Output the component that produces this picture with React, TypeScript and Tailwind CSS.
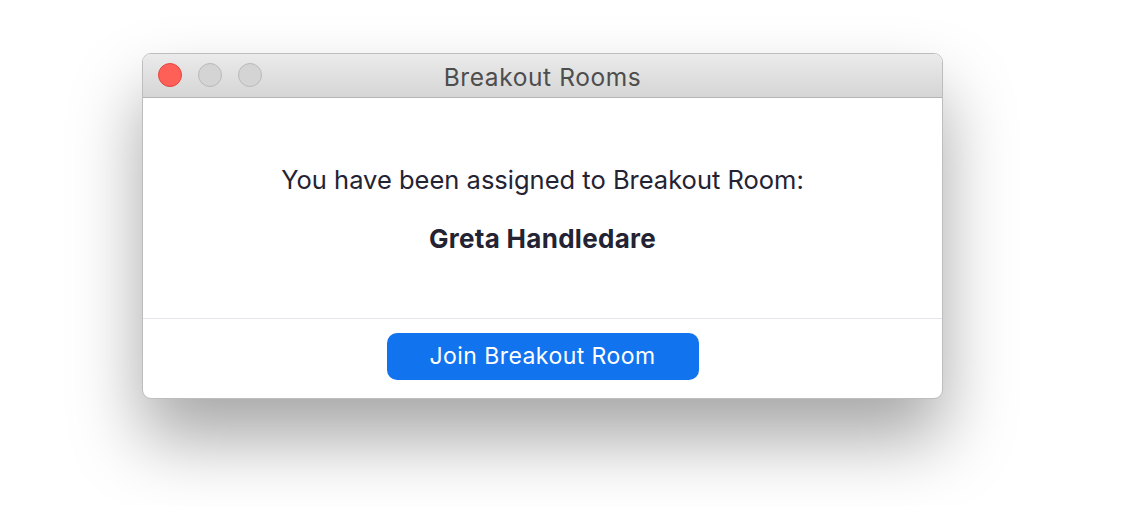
export default function App() {
  return (
    <div className="h-[506px] w-[1130px] bg-white pl-[142px] pt-[53px] font-['Inter','Noto_Sans',sans-serif]">
      <div className="flex w-[801px] flex-col overflow-hidden rounded-[9px] border border-[#bdbdbd] bg-white shadow-[0_40px_70px_rgba(0,0,0,0.35)]">
        <div className="relative flex h-[44px] items-center justify-center border-b border-[#b3b3b3] bg-gradient-to-b from-[#ebebeb] to-[#d5d5d5]">
          <div className="absolute left-[15px] top-[9px] flex gap-[16px]">
            <span className="h-[24px] w-[24px] rounded-full border border-[#e2463f] bg-[#fe5f57]" />
            <span className="h-[24px] w-[24px] rounded-full border border-[#b9b9b9] bg-[#d4d4d4]" />
            <span className="h-[24px] w-[24px] rounded-full border border-[#b9b9b9] bg-[#d4d4d4]" />
          </div>
          <span className="mt-[3px] text-[24.5px] tracking-[0.6px] text-[#4d4d4d]">Breakout Rooms</span>
        </div>
        <div className="flex h-[220px] flex-col items-center pt-[66px] text-[#232333]">
          <p className="text-[25.5px] leading-[31px]">You have been assigned to Breakout Room:</p>
          <p className="mt-[28px] text-[26px] font-bold leading-[31px] tracking-[0.3px]">Greta Handledare</p>
        </div>
        <div className="flex h-[80px] items-start justify-center border-t border-[#e4e6ec] pt-[14px]">
          <button className="flex h-[47px] w-[312px] items-center justify-center rounded-[10px] bg-[#1273ef] text-[23px] tracking-[0.45px] text-white">
            Join Breakout Room
          </button>
        </div>
      </div>
    </div>
  );
}
